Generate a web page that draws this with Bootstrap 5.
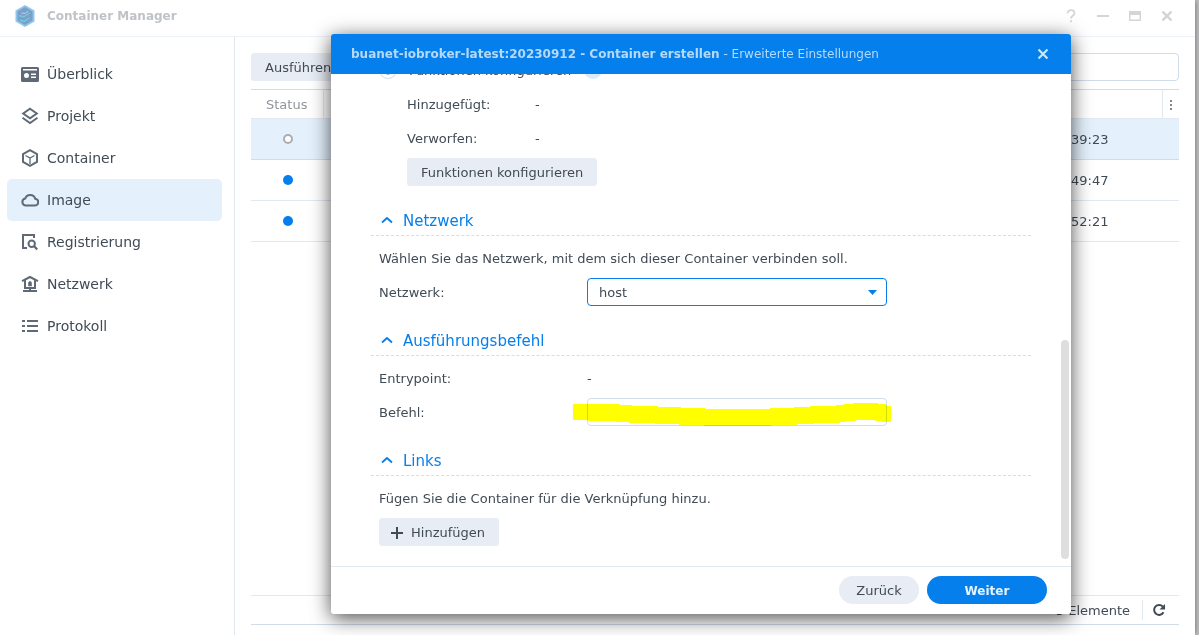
<!DOCTYPE html>
<html lang="de">
<head>
<meta charset="utf-8">
<meta name="viewport" content="width=device-width, initial-scale=1">
<title>Container Manager</title>
<link href="https://cdn.jsdelivr.net/npm/bootstrap@5.3.0/dist/css/bootstrap.min.css" rel="stylesheet">
<style>
  :root { --dsm-blue: #057feb; --dsm-text: #414b55; --dsm-line: #e1e8f0; --dsm-line-strong: #d0dde9; --dsm-select: #e4f1fd; --dsm-grey: #e8edf5; }
  body { font: 13px/20px "DejaVu Sans", Verdana, sans-serif; color: var(--dsm-text); background: #c4c4c4; }
  .app-window { margin-right: 4px; background: #fff; box-shadow: 0 0 6px rgba(0,0,0,.5); }
  .app-bar { height: 37px; padding: 0 12px 4px 14px; border-bottom: 1px solid #edf2f8; }
  .title-ui { font-size: 12px; }
  .app-title { color: #bfc2c6; line-height: 20px; margin-left: 11px; }
  .win-btn { width: 32px; height: 24px; color: #d3d5d9; }
  .icon-btn { background: none; border: 0; padding: 0; display: inline-flex; align-items: center; justify-content: center; }
  .side { width: 235px; padding: 16px 12px 0 7px; border-right: 1px solid var(--dsm-line); }
  .side a { height: 42px; padding: 0 14px; gap: 8px; border-radius: 5px; font-size: 14px; color: var(--dsm-text); text-decoration: none; }
  .side a.active { background: var(--dsm-select); }
  .side svg { color: #5f6a76; }
  .work { padding: 16px 16px 10px; min-width: 0; }
  .btn-dsm { height: 28px; padding: 2px 14px 0; border: 0; border-radius: 3px; background: var(--dsm-grey); color: var(--dsm-text); font-size: 13px; line-height: 26px; }
  .btn-add { padding-left: 12px; gap: 8px; }
  .search { height: 28px; width: 300px; border: 1px solid var(--dsm-line-strong); border-radius: 4px; padding: 0 10px; }
  .img-table { border-top: 1px solid var(--dsm-line-strong); table-layout: fixed; width: 100%; border-collapse: separate; border-spacing: 0; }
  .img-table th { height: 29px; font-weight: 400; color: #90959b; border-bottom: 1px solid var(--dsm-line); border-right: 1px solid var(--dsm-line); padding: 2px 15px 0; }
  .img-table th:last-child { border-right: 0; padding: 0; }
  .img-table td { height: 41px; border-bottom: 1px solid var(--dsm-line); padding: 0; }
  .img-table td:last-child { padding: 2px 0 0 18px; }
  .img-table .picked td { background: var(--dsm-select); border-color: var(--dsm-line-strong); }
  .dot { display: block; width: 10px; height: 10px; border-radius: 50%; background: var(--dsm-blue); margin: 0 auto; }
  .dot-off { background: #fff; border: 2px solid #abadb0; }
  .foot { height: 30px; border-top: 1px solid var(--dsm-line); border-bottom: 1px solid var(--dsm-line-strong); padding-right: 13px; }
  .foot-text { padding-top: 2px; }
  .rule-v { width: 1px; height: 20px; background: var(--dsm-line); margin: 0 9px 0 12px; }
  .wizard { position: absolute; top: 34px; right: 124px; bottom: 21px; left: 331px; background: #fff; border-radius: 3px; box-shadow: 0 4px 20px rgba(0,0,0,.7); }
  .wizard-bar { height: 40px; padding: 0 20px; background: var(--dsm-blue); border-radius: 3px 3px 0 0; color: #b4d9f9; }
  .wizard-body { padding: 0 40px 20px; overflow: hidden; min-height: 0; }
  .thumb { position: absolute; right: 2px; bottom: 7px; width: 8px; height: 219px; border-radius: 4px; background: #dedede; }
  .line-row { min-height: 28px; margin-bottom: 6px; padding-left: 8px; flex: none; }
  .line-row > label, .line-row > .say { padding-top: 2px; }
  .line-row.last { margin-bottom: 0; }
  .inset { padding-left: 36px; }
  .lbl-s { width: 128px; }
  .lbl-l { width: 208px; }
  .sect { height: 32px; margin: 18px 0 8px; padding: 2px 0 0 10px; gap: 10px; flex: none; border-bottom: 1px dashed #d6dde5; font-size: 15px; line-height: 20px; font-weight: 400; color: var(--dsm-blue); }
  .field { width: 300px; position: relative; }
  .field select, .field input { width: 100%; height: 28px; border: 1px solid var(--dsm-line-strong); border-radius: 4px; background: #fff; color: var(--dsm-text); padding: 2px 11px 0; display: block; }
  .field select { appearance: none; border-color: var(--dsm-blue); }
  .caret { position: absolute; right: 10px; top: 12px; pointer-events: none; }
  .marker { position: absolute; left: -14px; top: 0; mix-blend-mode: multiply; pointer-events: none; }
  .opt { appearance: none; width: 18px; height: 18px; border: 1px solid var(--dsm-line-strong); border-radius: 50%; margin: 0; background: radial-gradient(circle, var(--dsm-blue) 4px, #fff 5px); }
  .hint { width: 18px; height: 18px; border-radius: 50%; background: #d9eafc; margin-left: 13px; }
  .wizard-foot { height: 48px; flex: none; padding: 0 24px 1px; gap: 8px; border-top: 1px solid var(--dsm-line); }
  .pill { height: 28px; border-radius: 14px; border: 0; font-size: 13px; line-height: 26px; padding: 2px 0 0; width: 80px; background: var(--dsm-grey); color: var(--dsm-text); }
  .pill-main { width: 120px; background: var(--dsm-blue); color: #e6f2fd; font-size: 12px; }
</style>
</head>
<body class="overflow-hidden">
<div class="app-window position-relative vh-100 d-flex flex-column">
  <header class="app-bar d-flex align-items-center">
    <svg width="22" height="24" viewBox="0 0 22 24"><path d="M11 1l9.500 5.500v11L11 23l-9.500-5.500v-11z" fill="#8fc6ee"/><path d="M11 3l7.500 4.500v9L11 21l-7.500-4.500v-9z" fill="#7b9fc6"/><path d="M5 11l5 1 6-4v1.500l-6 4-5-1zM6 15.500l4.500 1 5-3.500v1.500l-5 3.500-4.500-1z" fill="#73cbe0"/><path d="M7.500 9l3.500.5 3-2.500" fill="none" stroke="#a6dcf0"/></svg>
    <span class="app-title title-ui fw-bold me-auto">Container Manager</span>
    <button class="icon-btn win-btn" aria-label="Hilfe"><svg width="12" height="14" viewBox="0 0 12 14" fill="none" stroke="currentColor" stroke-width="1.800"><path d="M2.500 4.500c0-4.500 7-4.500 7 0C9.500 6.500 6 6.500 6 9.500M6 11.200v2"/></svg></button>
    <button class="icon-btn win-btn" aria-label="Minimieren"><svg width="12" height="12"><path d="M0 5h12v2H0z" fill="currentColor"/></svg></button>
    <button class="icon-btn win-btn" aria-label="Maximieren"><svg width="12" height="10"><path d="M0 0h12v10H0zM1.500 4v4.500h9V4z" fill="currentColor" fill-rule="evenodd"/></svg></button>
    <button class="icon-btn win-btn" aria-label="Schließen"><svg width="10" height="10" stroke="currentColor" stroke-width="2.400"><path d="M.5.5l9 9M9.500.5l-9 9"/></svg></button>
  </header>
  <div class="d-flex flex-fill">
    <nav class="side flex-shrink-0">
      <a href="#" class="d-flex align-items-center"><svg width="18" height="18" viewBox="0 0 18 18"><path d="M1.500 2h15A1.500 1.500 0 0118 3.500v12a1.500 1.500 0 01-1.500 1.500h-15A1.500 1.500 0 010 15.500v-12A1.500 1.500 0 011.500 2zM2 4v1.500h14V4zM5.500 8a2.500 2.500 0 100 5 2.500 2.500 0 000-5zM10 8.500V10h5V8.500zM10 11.500V13h5v-1.500z" fill="currentColor" fill-rule="evenodd"/></svg>Überblick</a>
      <a href="#" class="d-flex align-items-center"><svg width="18" height="18" viewBox="0 0 18 18" fill="none" stroke="currentColor" stroke-width="2"><path d="M9 1.800l6.800 4.700L9 11.200 2.200 6.500z"/><path d="M1.500 10.800L9 16l7.500-5.200"/></svg>Projekt</a>
      <a href="#" class="d-flex align-items-center"><svg width="18" height="18" viewBox="0 0 18 18" fill="none" stroke="currentColor" stroke-width="2"><path d="M9 1.200l7 3.900v7.800l-7 3.900-7-3.900V5.100z"/><path d="M4.500 6.500L9 9l4.500-2.500M9 9v6" stroke-width="1.300"/></svg>Container</a>
      <a href="#" class="active d-flex align-items-center"><svg width="18" height="18" viewBox="0 0 18 18" fill="none" stroke="currentColor" stroke-width="2"><path d="M4.500 14.500h9a3.400 3.400 0 00.700-6.800A5.200 5.200 0 004.300 7.400a3.600 3.600 0 00.200 7.100z"/></svg>Image</a>
      <a href="#" class="d-flex align-items-center"><svg width="18" height="18" viewBox="0 0 18 18" fill="none" stroke="currentColor" stroke-width="2"><path d="M13 5V2H2v13h4"/><circle cx="10.700" cy="10.700" r="3.200"/><path d="M13 13l3.200 3.500" stroke-width="2.200"/></svg>Registrierung</a>
      <a href="#" class="d-flex align-items-center"><svg width="18" height="18" viewBox="0 0 18 18" fill="none" stroke="currentColor" stroke-width="2"><path d="M1 6.200L9 2l8 4.200M4 5.500V13h10V5.500M9 13v3M2 16h14"/><path d="M7.200 7.500L9 5.800l1.800 1.700v3.800H7.200z" fill="currentColor" stroke="none"/></svg>Netzwerk</a>
      <a href="#" class="d-flex align-items-center"><svg width="18" height="18" viewBox="0 0 18 18"><path d="M1 3h3v2H1zM6 3h11v2H6zM1 8h3v2H1zM6 8h11v2H6zM1 13h3v2H1zM6 13h11v2H6z" fill="currentColor"/></svg>Protokoll</a>
    </nav>
    <main class="work flex-fill d-flex flex-column">
      <div class="d-flex justify-content-between mb-2">
        <button class="btn-dsm">Ausführen</button>
        <input class="search" type="search" aria-label="Suche">
      </div>
      <table class="img-table">
        <colgroup><col style="width:73px"><col><col style="width:110px"><col style="width:16px"></colgroup>
        <thead><tr><th>Status</th><th></th><th></th><th class="text-center"><svg width="4" height="12" fill="#80868c"><path d="M1 1h2v2H1zM1 5h2v2H1zM1 9h2v2H1z"/></svg></th></tr></thead>
        <tbody>
          <tr class="picked"><td><span class="dot dot-off"></span></td><td></td><td colspan="2">39:23</td></tr>
          <tr><td><span class="dot"></span></td><td></td><td colspan="2">49:47</td></tr>
          <tr><td><span class="dot"></span></td><td></td><td colspan="2">52:21</td></tr>
        </tbody>
      </table>
      <div class="foot mt-auto d-flex align-items-center justify-content-end">
        <span class="foot-text">3 Elemente</span><span class="rule-v"></span>
        <button class="icon-btn" aria-label="Aktualisieren"><svg width="14" height="14" viewBox="0 0 14 14"><path d="M11.500 9.300A5 5 0 1110.800 3.500" fill="none" stroke="#414b55" stroke-width="2"/><path d="M13 1v5.500H7.500z" fill="#414b55"/></svg></button>
      </div>
    </main>
  </div>

  <section class="wizard d-flex flex-column" role="dialog" aria-labelledby="wizard-title">
    <div class="wizard-bar title-ui d-flex align-items-center flex-shrink-0">
      <span id="wizard-title" class="me-auto"><b>buanet-iobroker-latest:20230912 - Container erstellen</b> - Erweiterte Einstellungen</span>
      <button class="icon-btn" aria-label="Schließen"><svg width="16" height="16" stroke="#cde6fc" stroke-width="2.200"><path d="M3.500 3.500l9 9M12.500 3.500l-9 9"/></svg></button>
    </div>
    <div class="wizard-body position-relative flex-fill d-flex flex-column justify-content-end">
      <div class="line-row d-flex align-items-center"><input class="opt" type="radio" id="cap" checked><label class="ps-2 ms-1" for="cap">Funktionen konfigurieren</label><span class="hint"></span></div>
      <div class="line-row inset d-flex align-items-center"><span class="say lbl-s">Hinzugefügt:</span><span class="say">-</span></div>
      <div class="line-row inset d-flex align-items-center"><span class="say lbl-s">Verworfen:</span><span class="say">-</span></div>
      <div class="line-row last inset"><button class="btn-dsm">Funktionen konfigurieren</button></div>

      <h2 class="sect d-flex align-items-center"><svg width="12" height="10" fill="none" stroke="currentColor" stroke-width="1.800"><path d="M1 6.500L6 2l5 4.500"/></svg>Netzwerk</h2>
      <div class="line-row d-flex align-items-center"><span class="say">Wählen Sie das Netzwerk, mit dem sich dieser Container verbinden soll.</span></div>
      <div class="line-row last d-flex align-items-center"><label class="lbl-l" for="net">Netzwerk:</label>
        <div class="field"><select id="net"><option>host</option></select><svg class="caret" width="9" height="5"><path d="M0 0h9L4.500 5z" fill="#057feb"/></svg></div></div>

      <h2 class="sect d-flex align-items-center"><svg width="12" height="10" fill="none" stroke="currentColor" stroke-width="1.800"><path d="M1 6.500L6 2l5 4.500"/></svg>Ausführungsbefehl</h2>
      <div class="line-row d-flex align-items-center"><span class="say lbl-l">Entrypoint:</span><span class="say">-</span></div>
      <div class="line-row last d-flex align-items-center"><label class="lbl-l" for="cmd">Befehl:</label>
        <div class="field"><input id="cmd" type="text"><svg class="marker" width="318" height="28" viewBox="39 384 954 84"><path fill="#ff0" d="M39 402H180V405H216V408H294V411H363V414H435V417H630V414H702V411H750V408H828V405H850V402H879V399H954V402H978V405H981V408H993V456H963V453H945V450H887V453H858V456H840V459H762V462H711V465H633V468H432V465H357V462H285V459H207V456H168V453H84V450H39z"/></svg></div></div>

      <h2 class="sect d-flex align-items-center"><svg width="12" height="10" fill="none" stroke="currentColor" stroke-width="1.800"><path d="M1 6.500L6 2l5 4.500"/></svg>Links</h2>
      <div class="line-row d-flex align-items-center"><span class="say">Fügen Sie die Container für die Verknüpfung hinzu.</span></div>
      <div class="line-row last"><button class="btn-dsm btn-add d-inline-flex align-items-center"><svg width="12" height="12"><path d="M5 0h2v5h5v2H7v5H5V7H0V5h5z" fill="#414b55"/></svg>Hinzufügen</button></div>
      <div class="thumb"></div>
    </div>
    <div class="wizard-foot d-flex align-items-center justify-content-end">
      <button class="pill">Zurück</button>
      <button class="pill pill-main fw-bold">Weiter</button>
    </div>
  </section>
</div>
<script src="https://cdn.jsdelivr.net/npm/bootstrap@5.3.0/dist/js/bootstrap.bundle.min.js"></script>
</body>
</html>
